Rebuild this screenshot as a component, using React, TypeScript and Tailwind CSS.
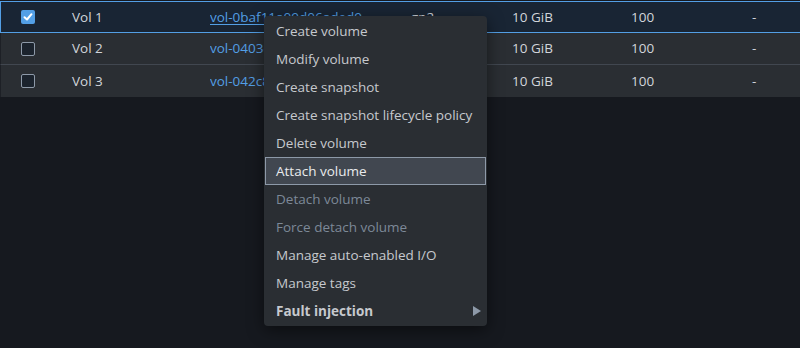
type Row = { name: string; id: string; type: string; size: string; iops: string; checked: boolean };

const rows: Row[] = [
  { name: "Vol 1", id: "vol-0baf11a09d06aded9", type: "gp2", size: "10 GiB", iops: "100", checked: true },
  { name: "Vol 2", id: "vol-0403c1b2e6f0a7d15", type: "gp2", size: "10 GiB", iops: "100", checked: false },
  { name: "Vol 3", id: "vol-042c8e5d17b9f3a60", type: "gp2", size: "10 GiB", iops: "100", checked: false },
];

const menu: { label: string; disabled?: boolean; active?: boolean }[] = [
  { label: "Create volume" },
  { label: "Modify volume" },
  { label: "Create snapshot" },
  { label: "Create snapshot lifecycle policy" },
  { label: "Delete volume" },
  { label: "Attach volume", active: true },
  { label: "Detach volume", disabled: true },
  { label: "Force detach volume", disabled: true },
  { label: "Manage auto-enabled I/O" },
  { label: "Manage tags" },
];

function Checkbox({ checked }: { checked: boolean }) {
  if (checked) {
    return (
      <div className="w-[14px] h-[14px] rounded-[2px] bg-[#539fe5] flex items-center justify-center">
        <svg width="10" height="10" viewBox="0 0 10 10">
          <path d="M1.5 5.2 L4 7.5 L8.5 2.2" stroke="#fff" strokeWidth="2" fill="none" strokeLinecap="round" strokeLinejoin="round" />
        </svg>
      </div>
    );
  }
  return <div className="w-[14px] h-[14px] rounded-[2px] border-[1.5px] border-[#8d99a8] bg-[#1b232d]" />;
}

export default function App() {
  return (
    <div
      className="relative w-[800px] h-[348px] bg-[#16191f] pt-px overflow-hidden text-[13.5px]"
      style={{ fontFamily: '"Open Sans", "Noto Sans", sans-serif' }}
    >
      <div className="flex flex-col">
        {rows.map((r, i) => (
          <div
            key={r.name}
            className={
              r.checked
                ? "flex items-center h-[32px] bg-[#192534] border-y border-l border-[#539fe5]"
                : i === 1
                ? "flex items-center h-[32px] bg-[#2a2e33] border-b border-[#414750] border-l border-l-[#1d2026]"
                : "flex items-center h-[32px] bg-[#2a2e33] border-l border-l-[#1d2026]"
            }
          >
            <div className="w-[71px] pl-[20px] shrink-0">
              <Checkbox checked={r.checked} />
            </div>
            <div className="w-[138px] shrink-0 text-[#d1d5db]">{r.name}</div>
            <div className={"w-[201px] shrink-0 text-[#539fe5] whitespace-nowrap overflow-hidden " + (r.checked ? "underline underline-offset-2" : "")}>
              {r.id}
            </div>
            <div className="w-[101px] shrink-0 text-[#d1d5db]">{r.type}</div>
            <div className="w-[119px] shrink-0 text-[#d1d5db]">{r.size}</div>
            <div className="w-[121px] shrink-0 text-[#d1d5db]">{r.iops}</div>
            <div className="text-[#d1d5db]">-</div>
          </div>
        ))}
      </div>

      {/* actions dropdown over the table */}
      <div className="absolute left-[264px] top-[16px] w-[223px] rounded-[4px] bg-[#2a2e33] py-px shadow-[0_4px_16px_rgba(0,0,0,0.5)]">
        {menu.map((m) => (
          <div
            key={m.label}
            className={
              m.active
                ? "mx-px h-[28px] flex items-center pl-[10px] bg-[#414750] border border-[#8d99a8] text-[#e9ebed]"
                : m.disabled
                ? "mx-px h-[28px] flex items-center pl-[10px] border border-transparent text-[#7d8998]"
                : "mx-px h-[28px] flex items-center pl-[10px] border border-transparent text-[#c6c9ce]"
            }
          >
            {m.label}
          </div>
        ))}
        <div className="mx-px h-[28px] flex items-center justify-between pl-[11px] pr-[5px] text-[#c6c9ce] font-bold">
          <span>Fault injection</span>
          <svg width="8" height="10" viewBox="0 0 8 10">
            <path d="M0 0 L8 5 L0 10 Z" fill="#8d99a8" />
          </svg>
        </div>
      </div>
    </div>
  );
}
